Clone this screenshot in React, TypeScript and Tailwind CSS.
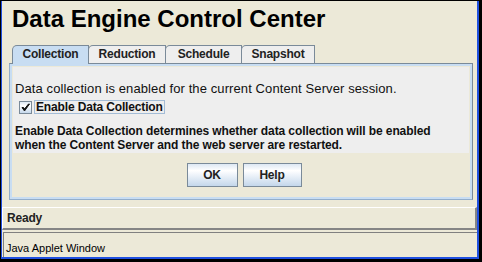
import React from "react";

const btn =
  "h-[24px] border border-[#7A8A99] font-bold text-[12px] leading-[22px] text-[#222] tracking-[-0.2px] bg-[linear-gradient(to_bottom,#DDE8F3_0%,#FFFFFF_30%,#F2F6FB_45%,#C4D7EB_100%)]";

export default function App() {
  return (
    <div className="w-[482px] h-[262px] bg-black pt-[1px] pl-[1px] pr-[3px] pb-[3px] flex font-['Liberation_Sans',Arial,sans-serif] text-black">
      <div className="flex-1 flex flex-col bg-[#ECE9D8] border-l border-r-2 border-b-2 border-[#2050E0]">
        {/* Title */}
        <div className="pl-[10px] pt-[4px] h-[32px] text-[24px] leading-[28px] font-bold whitespace-nowrap">
          Data Engine Control Center
        </div>

        {/* Tabs */}
        <div className="mt-[12px] ml-[10px] flex items-end h-[18px] text-[12px] font-bold tracking-[-0.2px] text-[#222]">
          <div className="relative z-10 -mb-[1px] w-[77px] h-[19px] border-t border-l border-r border-[#7A8A99] rounded-tl-[5px] bg-[#C8DDF2] text-center leading-[17px]">
            Collection
          </div>
          <div className="-ml-[1px] w-[78px] h-[18px] border-t border-l border-r border-[#7A8A99] rounded-tl-[5px] bg-[#EEEEEE] text-center leading-[17px]">
            Reduction
          </div>
          <div className="-ml-[1px] w-[77px] h-[18px] border-t border-l border-r border-[#7A8A99] rounded-tl-[5px] bg-[#EEEEEE] text-center leading-[17px]">
            Schedule
          </div>
          <div className="-ml-[1px] w-[74px] h-[18px] border-t border-l border-r border-[#7A8A99] rounded-tl-[5px] bg-[#EEEEEE] text-center leading-[17px]">
            Snapshot
          </div>
        </div>

        {/* Panel */}
        <div className="ml-[7px] w-[464px] h-[137px] flex border border-t-[#7A8A99] border-r-[#7A8A99] border-b-[#93AECB] border-l-[#93AECB]">
          <div className="flex-1 flex border-2 border-[#C8DDF2]">
            <div className="flex-1 flex flex-col bg-[#ECE9D8] px-[1px] pt-[1px]">
              <div className="h-[86px] bg-[#EEEEEE] pl-[2px] pt-[14px] text-[#111]">
                <div className="text-[13px] leading-[16px] tracking-[0.1px] whitespace-nowrap">
                  Data collection is enabled for the current Content Server session.
                </div>
                <div className="mt-[3px] h-[14px] flex items-center">
                  <div className="ml-[4px] w-[13px] h-[13px] border border-[#7A8A99] flex items-center justify-center bg-[linear-gradient(to_bottom,#DDE8F3_0%,#FFFFFF_35%,#C4D7EB_100%)]">
                    <svg width="11" height="11" viewBox="0 0 11 11">
                      <path d="M2 5.5 L4.5 9 L9.5 2 L8.5 2 L4.5 7 L3.5 5.5 Z" fill="#111" stroke="#111" strokeWidth="1" strokeLinejoin="round" />
                    </svg>
                  </div>
                  <div className="ml-[2px] h-[14px] w-[131px] border border-[#A3BCD6] pl-[1px] text-[12px] leading-[12px] font-bold tracking-[-0.15px] whitespace-nowrap">
                    Enable Data Collection
                  </div>
                </div>
                <div className="mt-[10px] text-[12px] leading-[14px] font-bold tracking-[-0.1px] whitespace-nowrap">
                  Enable Data Collection determines whether data collection will be enabled
                  <br />
                  when the Content Server and the web server are restarted.
                </div>
              </div>
              <div className="mt-[10px] flex justify-center gap-[5px] pl-[6px]">
                <button className={`${btn} w-[51px]`}>OK</button>
                <button className={`${btn} w-[59px]`}>Help</button>
              </div>
            </div>
          </div>
        </div>

        {/* Status: Ready */}
        <div className="mt-[7px] h-[23px] border-t border-l border-t-white border-l-white border-b-2 border-r-2 border-b-[#858585] border-r-[#858585] pl-[4px] text-[12px] leading-[20px] font-bold tracking-[-0.2px] text-[#222]">
          Ready
        </div>

        {/* Java Applet Window */}
        <div className="mt-[2px] ml-[1px] flex-1 border-t border-l border-[#808080] pl-[2px] pt-[8px] text-[11px] leading-[14px] text-black">
          Java Applet Window
        </div>
      </div>
    </div>
  );
}
